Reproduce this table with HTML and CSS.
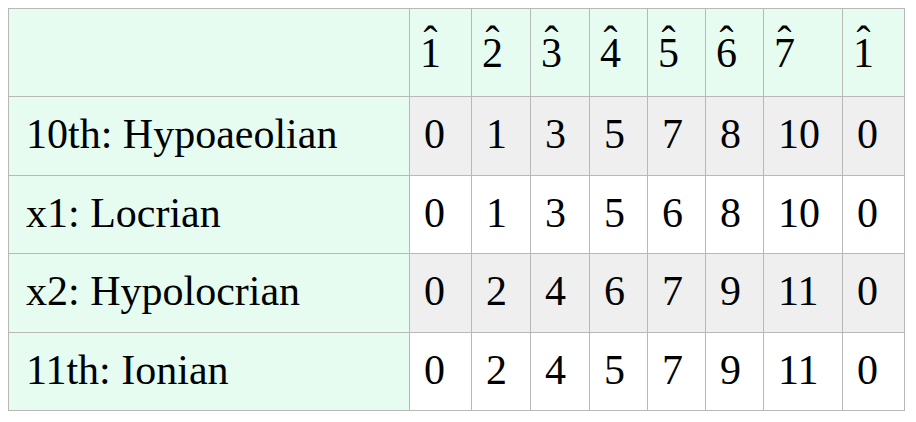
FILE: index.html
```html
<!DOCTYPE html>
<html>
<head>
<meta charset="utf-8">
<link rel="stylesheet" href="styles.css">
</head>
<body>
<table class="modes">
  <colgroup>
    <col class="c-name">
    <col class="c-62">
    <col class="c-59">
    <col class="c-59">
    <col class="c-58">
    <col class="c-58">
    <col class="c-58">
    <col class="c-79">
    <col class="c-62">
  </colgroup>
  <thead>
    <tr class="head-row">
      <th class="name"></th>
      <th><span class="deg">1</span></th>
      <th><span class="deg">2</span></th>
      <th><span class="deg">3</span></th>
      <th><span class="deg">4</span></th>
      <th><span class="deg">5</span></th>
      <th><span class="deg">6</span></th>
      <th><span class="deg">7</span></th>
      <th><span class="deg">1</span></th>
    </tr>
  </thead>
  <tbody>
    <tr class="row shaded">
      <th class="name">10th: Hypoaeolian</th>
      <td>0</td><td>1</td><td>3</td><td>5</td><td>7</td><td>8</td><td>10</td><td>0</td>
    </tr>
    <tr class="row">
      <th class="name">x1: Locrian</th>
      <td>0</td><td>1</td><td>3</td><td>5</td><td>6</td><td>8</td><td>10</td><td>0</td>
    </tr>
    <tr class="row shaded">
      <th class="name">x2: Hypolocrian</th>
      <td>0</td><td>2</td><td>4</td><td>6</td><td>7</td><td>9</td><td>11</td><td>0</td>
    </tr>
    <tr class="row">
      <th class="name">11th: Ionian</th>
      <td>0</td><td>2</td><td>4</td><td>5</td><td>7</td><td>9</td><td>11</td><td>0</td>
    </tr>
  </tbody>
</table>
</body>
</html>
```
FILE: styles.css
```css
html, body {
  margin: 0;
  padding: 0;
  background: #ffffff;
}
body {
  padding: 8px;
  font-family: "Liberation Serif", "Times New Roman", serif;
  color: #000;
}
.modes {
  border-collapse: collapse;
  table-layout: fixed;
  width: 897px;
  font-size: 42px;
}
.modes th, .modes td {
  border: 1px solid #b8b8b8;
  font-weight: normal;
  padding: 0 0 3px 14px;
  text-align: left;
  vertical-align: middle;
  line-height: 48px;
}
.c-name { width: 401px; }
.c-62 { width: 62px; }
.c-59 { width: 59px; }
.c-58 { width: 58px; }
.c-79 { width: 79px; }

.head-row { height: 88px; }
.modes .head-row th {
  background: #e6fcf0;
  padding: 0 0 0 10px;
}
.row { height: 78.5px; }
.row td { background: #ffffff; }
.row.shaded td { background: #efefef; }
.modes th.name {
  background: #e6fcf0;
  padding-left: 17px;
}

.deg {
  position: relative;
  display: inline-block;
}
.deg::before {
  content: "\02C6";
  position: absolute;
  left: 0;
  right: 0;
  top: -9px;
  text-align: center;
  line-height: 1;
}
```
